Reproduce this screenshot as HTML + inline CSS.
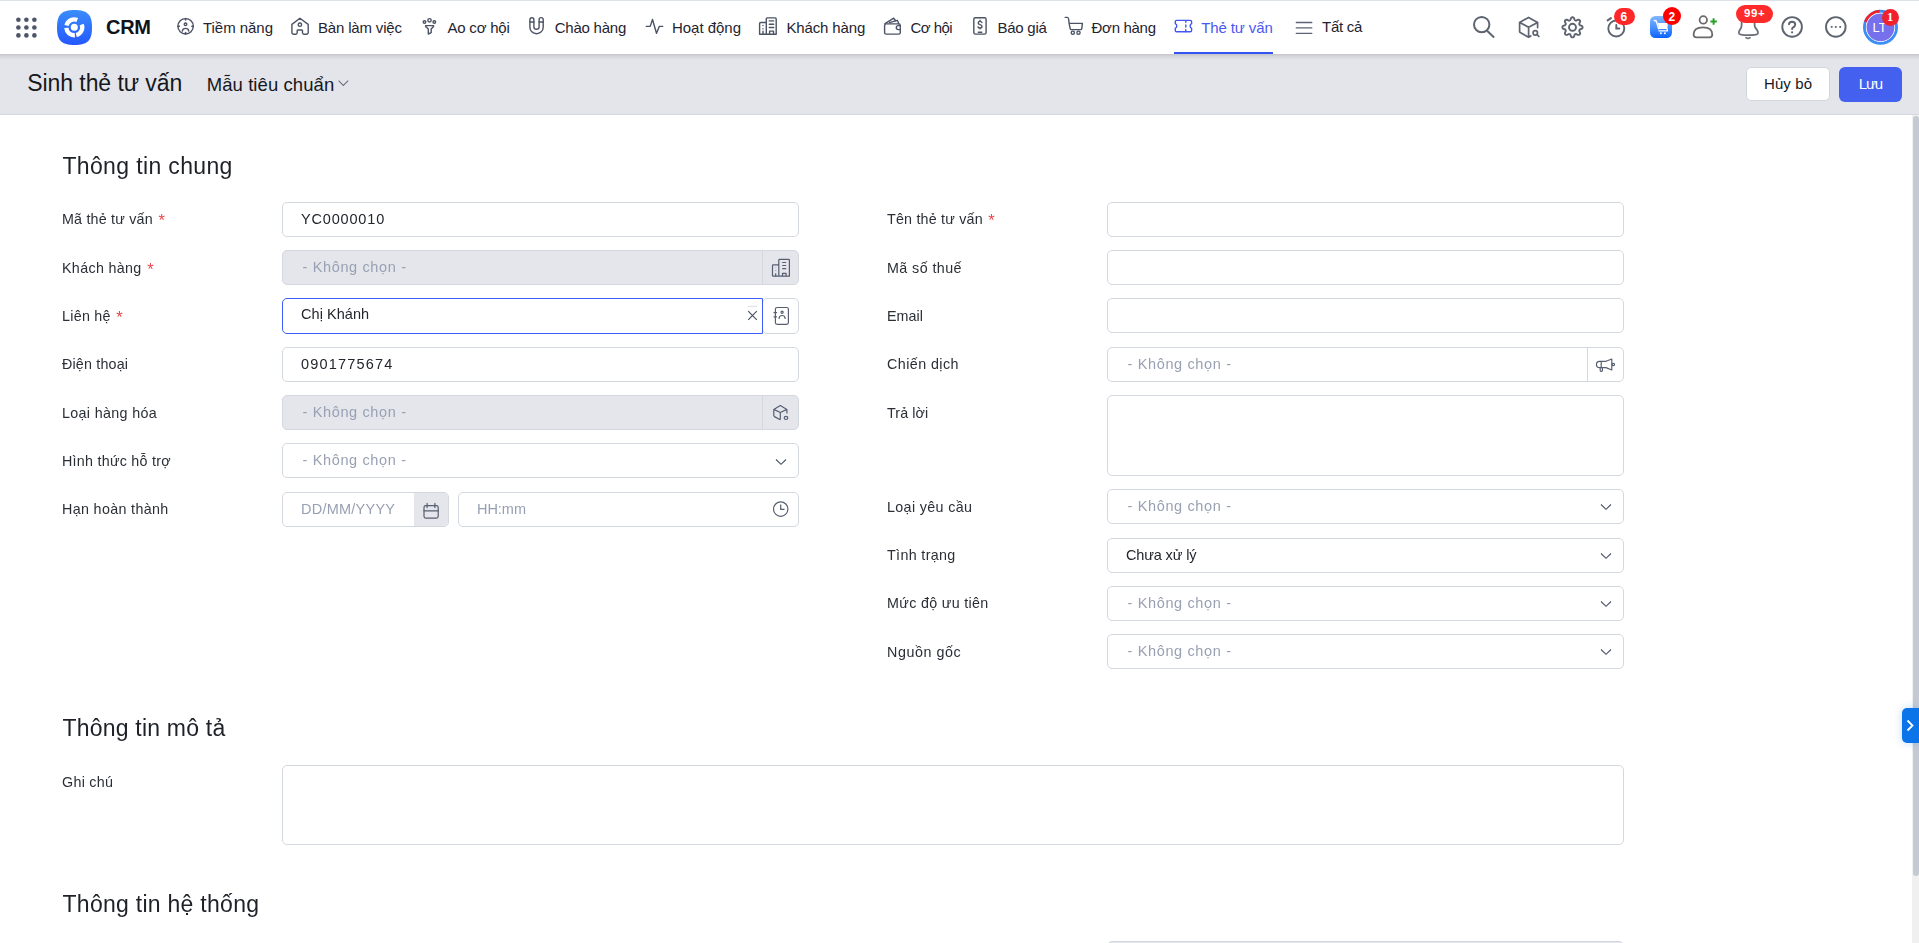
<!DOCTYPE html>
<html><head><meta charset="utf-8"><style>
html,body{margin:0;padding:0}
body{width:1919px;height:943px;overflow:hidden;position:relative;background:#fff;font-family:"Liberation Sans",sans-serif}
.a{position:absolute}
.t{position:absolute;white-space:nowrap}
svg.a{overflow:visible}
</style></head><body>
<div class="a" style="left:0px;top:0px;width:1919px;height:1px;background:#dde2e6"></div>
<div class="a" style="left:0px;top:1px;width:1919px;height:53px;background:#fff"></div>
<svg class="a" style="left:0px;top:0px;" width="50" height="54" viewBox="0 0 50 54"><circle cx="18.4" cy="19.7" r="2.3" fill="#4d5568"/><circle cx="18.4" cy="27.5" r="2.3" fill="#4d5568"/><circle cx="18.4" cy="35.4" r="2.3" fill="#4d5568"/><circle cx="26.4" cy="19.7" r="2.3" fill="#4d5568"/><circle cx="26.4" cy="27.5" r="2.3" fill="#4d5568"/><circle cx="26.4" cy="35.4" r="2.3" fill="#4d5568"/><circle cx="34.4" cy="19.7" r="2.3" fill="#4d5568"/><circle cx="34.4" cy="27.5" r="2.3" fill="#4d5568"/><circle cx="34.4" cy="35.4" r="2.3" fill="#4d5568"/></svg>
<svg class="a" style="left:57px;top:10px;" width="35" height="35" viewBox="0 0 35 35"><defs><linearGradient id="lg" x1="0" y1="0" x2="0" y2="1"><stop offset="0" stop-color="#3a8cfb"/><stop offset="1" stop-color="#2458fe"/></linearGradient></defs>
<path d="M17.5 0C30.5 0 35 4.5 35 17.5S30.5 35 17.5 35 0 30.5 0 17.5 4.5 0 17.5 0Z" fill="url(#lg)"/>
<circle cx="17.3" cy="17.3" r="3.5" fill="#fff"/><path d="M7.46 15.03A10.1 10.1 0 0 1 21.08 7.94L19.47 11.92A5.8 5.8 0 0 0 11.65 16.00Z" fill="#fff"/><path d="M26.73 13.68A10.1 10.1 0 0 1 19.74 27.10L18.70 22.93A5.8 5.8 0 0 0 22.71 15.22Z" fill="#fff"/><path d="M18.00 27.38A10.1 10.1 0 0 1 7.22 18.00L11.51 17.70A5.8 5.8 0 0 0 17.70 23.09Z" fill="#fff"/></svg>
<div id="t1" class="t" style="left:106px;top:15.00px;font-size:20px;line-height:24px;color:#111318;letter-spacing:-0.273px;font-weight:bold;">CRM</div>
<svg class="a" style="left:172px;top:14px;" width="28" height="26" viewBox="0 0 28 26"><g fill="none" stroke="#4b5365" stroke-width="1.4" stroke-linecap="round" stroke-linejoin="round"><circle cx="13.6" cy="12.3" r="7.7"/><circle cx="13.5" cy="10.3" r="1.3"/><path d="M10.3 17.1A3.3 3.3 0 0 1 16.8 17.1"/><path d="M13.6 4.6V6M13.6 18.6V20M5.9 12.3H7.3M19.9 12.3H21.3" stroke-width="1.6"/></g></svg>
<svg class="a" style="left:286px;top:14px;" width="28" height="26" viewBox="0 0 28 26"><g fill="none" stroke="#4b5365" stroke-width="1.4" stroke-linecap="round" stroke-linejoin="round"><path d="M5.9 10.4L13.9 4.2L22.2 10.4V18.4A1.8 1.8 0 0 1 20.4 20.2H17.8Q16.6 20.2 16.5 18.8V16.6Q16.4 16 15.8 16H11.9Q11.3 16 11.2 16.6V18.8Q11.1 20.2 9.9 20.2H7.7A1.8 1.8 0 0 1 5.9 18.4Z"/><circle cx="13.9" cy="10.7" r="1.7"/></g></svg>
<svg class="a" style="left:416px;top:14px;" width="28" height="26" viewBox="0 0 28 26"><g fill="none" stroke="#4b5365" stroke-width="1.4" stroke-linecap="round" stroke-linejoin="round"><circle cx="8.5" cy="8" r="1.3"/><circle cx="13.5" cy="6.3" r="1.7"/><circle cx="18.3" cy="8" r="1.3"/><path d="M9.6 11.6H17.6Q17.8 12.6 17.1 13.1L15.2 15.1V18.6L12.3 20V15.1L10.2 13.1Q9.4 12.6 9.6 11.6Z"/></g></svg>
<svg class="a" style="left:522px;top:14px;" width="28" height="26" viewBox="0 0 28 26"><g fill="none" stroke="#4b5365" stroke-width="1.4" stroke-linecap="round" stroke-linejoin="round"><path d="M7.9 13.15V5.7A2 2 0 0 1 11.9 5.7V12.7A2.6 2.6 0 0 0 17.1 12.7V5.7A2.05 2.05 0 0 1 21.2 5.7V13.15A6.65 6.65 0 0 1 7.9 13.15Z"/><path d="M7.9 8H11.9M17.1 8H21.2"/></g></svg>
<svg class="a" style="left:640px;top:14px;" width="28" height="26" viewBox="0 0 28 26"><g fill="none" stroke="#4b5365" stroke-width="1.4" stroke-linecap="round" stroke-linejoin="round"><path d="M6.3 12.4H10.2L12.5 5.5L16.5 19.3L19.3 12.4H22.7"/></g></svg>
<svg class="a" style="left:754px;top:14px;" width="28" height="26" viewBox="0 0 28 26"><g fill="none" stroke="#4b5365" stroke-width="1.4" stroke-linecap="round" stroke-linejoin="round"><path d="M5.6 20.2V9.6Q5.6 8.5 6.7 8.5H12.3M12.3 20.2V5Q12.3 3.9 13.4 3.9H21.1Q22.2 3.9 22.2 5V20.2H5.6"/><path d="M15.3 6.9H19.7M15.3 10.3H19.7M15.3 13.5H19.7M15.6 20.2V17.1H19.5V20.2M9 11.4V11.5M9 14.7V14.8M9 17.3V20.2"/></g></svg>
<svg class="a" style="left:878px;top:14px;" width="28" height="26" viewBox="0 0 28 26"><g fill="none" stroke="#4b5365" stroke-width="1.4" stroke-linecap="round" stroke-linejoin="round"><rect x="6.6" y="9.9" width="15.7" height="10.2" rx="1.6"/><path d="M22.3 11.6H20.3A2 2 0 0 0 20.3 15.6H22.3"/><path d="M7 9.7L15.7 4.2L17.8 7M11.5 8.6L19.3 6.3L20.8 9.7"/></g></svg>
<svg class="a" style="left:966px;top:14px;" width="28" height="26" viewBox="0 0 28 26"><g fill="none" stroke="#4b5365" stroke-width="1.4" stroke-linecap="round" stroke-linejoin="round"><rect x="7.8" y="3.7" width="12.3" height="16.4" rx="1.6"/><path d="M15.9 8.5Q15.4 7.4 14 7.4Q12.2 7.4 12.2 8.9Q12.2 10.2 14 10.6Q16 11 16 12.5Q16 14 14 14Q12.5 14 12 12.9M14 6.3V7.4M14 14V14.9M12.3 18.3H15.8"/></g></svg>
<svg class="a" style="left:1060px;top:14px;" width="28" height="26" viewBox="0 0 28 26"><g fill="none" stroke="#4b5365" stroke-width="1.4" stroke-linecap="round" stroke-linejoin="round"><path d="M5.2 3.4H7.2Q8.4 3.6 8.6 5L9.1 9.4H22.4L21.8 14.6Q21.6 15.6 20.6 15.6H11.3Q10.4 15.6 10.2 14.6L9.1 9.4"/><circle cx="12.8" cy="18.7" r="1.6"/><circle cx="18.5" cy="18.7" r="1.6"/></g></svg>
<svg class="a" style="left:1170px;top:15px;" width="28" height="26" viewBox="0 0 28 26"><g fill="none" stroke="#4257f0" stroke-width="1.4" stroke-linecap="round" stroke-linejoin="round"><path d="M5.3 6.7Q5.3 5.4 6.6 5.4H20.3Q21.6 5.4 21.6 6.7V8.6A2.6 2.6 0 0 0 21.6 13.3V15.4Q21.6 16.7 20.3 16.7H6.6Q5.3 16.7 5.3 15.4V13.3A2.6 2.6 0 0 0 5.3 8.6Z"/><path d="M15.8 5.6V7.2M15.8 10V12M15.8 14.8V16.5"/></g></svg>
<svg class="a" style="left:1290px;top:14px;" width="28" height="26" viewBox="0 0 28 26"><g fill="none" stroke="#5c6376" stroke-width="1.3" stroke-linecap="round" stroke-linejoin="round"><path d="M6.3 8.5H21.8M6.3 13.9H21.8M6.3 19.4H21.8"/></g></svg>
<div id="t2" class="t" style="left:203px;top:19.00px;font-size:15px;line-height:18px;color:#1f2430;letter-spacing:-0.039px;font-weight:normal;">Tiềm năng</div>
<div id="t3" class="t" style="left:318px;top:19.00px;font-size:15px;line-height:18px;color:#1f2430;letter-spacing:-0.170px;font-weight:normal;">Bàn làm việc</div>
<div id="t4" class="t" style="left:447.5px;top:19.00px;font-size:15px;line-height:18px;color:#1f2430;letter-spacing:-0.218px;font-weight:normal;">Ao cơ hội</div>
<div id="t5" class="t" style="left:554.75px;top:19.00px;font-size:15px;line-height:18px;color:#1f2430;letter-spacing:-0.238px;font-weight:normal;">Chào hàng</div>
<div id="t6" class="t" style="left:672px;top:19.00px;font-size:15px;line-height:18px;color:#1f2430;letter-spacing:-0.029px;font-weight:normal;">Hoạt động</div>
<div id="t7" class="t" style="left:786.5px;top:19.00px;font-size:15px;line-height:18px;color:#1f2430;letter-spacing:-0.148px;font-weight:normal;">Khách hàng</div>
<div id="t8" class="t" style="left:910.6px;top:19.00px;font-size:15px;line-height:18px;color:#1f2430;letter-spacing:-0.572px;font-weight:normal;">Cơ hội</div>
<div id="t9" class="t" style="left:997.5px;top:19.00px;font-size:15px;line-height:18px;color:#1f2430;letter-spacing:-0.246px;font-weight:normal;">Báo giá</div>
<div id="t10" class="t" style="left:1091.6px;top:19.00px;font-size:15px;line-height:18px;color:#1f2430;letter-spacing:-0.309px;font-weight:normal;">Đơn hàng</div>
<div id="t11" class="t" style="left:1201.25px;top:19.00px;font-size:15px;line-height:18px;color:#4a58f0;letter-spacing:-0.120px;font-weight:normal;">Thẻ tư vấn</div>
<div id="t12" class="t" style="left:1322px;top:18.00px;font-size:15px;line-height:18px;color:#1f2430;letter-spacing:-0.278px;font-weight:normal;">Tất cả</div>
<div class="a" style="left:1174px;top:52px;width:99px;height:2px;background:#3553f0"></div>
<svg class="a" style="left:1466px;top:10px;" width="34" height="34" viewBox="0 0 34 34"><g fill="none" stroke="#5d6470" stroke-width="2" stroke-linecap="round"><circle cx="15.7" cy="14.6" r="7.7"/><path d="M21.6 21.3L27.6 26.9"/></g></svg>
<svg class="a" style="left:1512px;top:10px;" width="34" height="34" viewBox="0 0 34 34"><g fill="none" stroke="#5d6470" stroke-width="1.7" stroke-linecap="round" stroke-linejoin="round"><path d="M16.6 27.2L8.2 22.6Q7.6 22.2 7.6 21.6V12.4L16.6 7.4L25.6 12.4V17.6M7.6 12.4L16.6 17.2L25.6 12.4M16.6 17.2V27.2L18.8 26"/><circle cx="23.3" cy="22.9" r="2.2"/><path d="M25 24.6L26.9 26.5"/></g></svg>
<svg class="a" style="left:1555px;top:10px;" width="34" height="34" viewBox="0 0 34 34"><g fill="none" stroke="#5d6470" stroke-width="1.9" stroke-linejoin="round"><path d="M27.60 17.30 L27.55 17.69 L27.38 18.08 L27.11 18.44 L26.73 18.76 L26.08 19.01 L25.43 19.20 L25.03 19.42 L24.71 19.64 L24.49 19.88 L24.34 20.13 L24.26 20.42 L24.26 20.74 L24.32 21.12 L24.45 21.56 L24.78 22.16 L25.06 22.79 L25.10 23.29 L25.04 23.74 L24.88 24.12 L24.64 24.44 L24.32 24.68 L23.94 24.84 L23.49 24.90 L22.99 24.86 L22.36 24.58 L21.76 24.25 L21.32 24.12 L20.94 24.06 L20.62 24.06 L20.33 24.14 L20.08 24.29 L19.84 24.51 L19.62 24.83 L19.40 25.23 L19.21 25.88 L18.96 26.53 L18.64 26.91 L18.28 27.18 L17.89 27.35 L17.50 27.40 L17.11 27.35 L16.72 27.18 L16.36 26.91 L16.04 26.53 L15.79 25.88 L15.60 25.23 L15.38 24.83 L15.16 24.51 L14.92 24.29 L14.67 24.14 L14.38 24.06 L14.06 24.06 L13.68 24.12 L13.24 24.25 L12.64 24.58 L12.01 24.86 L11.51 24.90 L11.06 24.84 L10.68 24.68 L10.36 24.44 L10.12 24.12 L9.96 23.74 L9.90 23.29 L9.94 22.79 L10.22 22.16 L10.55 21.56 L10.68 21.12 L10.74 20.74 L10.74 20.42 L10.66 20.13 L10.51 19.88 L10.29 19.64 L9.97 19.42 L9.57 19.20 L8.92 19.01 L8.27 18.76 L7.89 18.44 L7.62 18.08 L7.45 17.69 L7.40 17.30 L7.45 16.91 L7.62 16.52 L7.89 16.16 L8.27 15.84 L8.92 15.59 L9.57 15.40 L9.97 15.18 L10.29 14.96 L10.51 14.72 L10.66 14.47 L10.74 14.18 L10.74 13.86 L10.68 13.48 L10.55 13.04 L10.22 12.44 L9.94 11.81 L9.90 11.31 L9.96 10.86 L10.12 10.48 L10.36 10.16 L10.68 9.92 L11.06 9.76 L11.51 9.70 L12.01 9.74 L12.64 10.02 L13.24 10.35 L13.68 10.48 L14.06 10.54 L14.38 10.54 L14.67 10.46 L14.92 10.31 L15.16 10.09 L15.38 9.77 L15.60 9.37 L15.79 8.72 L16.04 8.07 L16.36 7.69 L16.72 7.42 L17.11 7.25 L17.50 7.20 L17.89 7.25 L18.28 7.42 L18.64 7.69 L18.96 8.07 L19.21 8.72 L19.40 9.37 L19.62 9.77 L19.84 10.09 L20.08 10.31 L20.33 10.46 L20.62 10.54 L20.94 10.54 L21.32 10.48 L21.76 10.35 L22.36 10.02 L22.99 9.74 L23.49 9.70 L23.94 9.76 L24.32 9.92 L24.64 10.16 L24.88 10.48 L25.04 10.86 L25.10 11.31 L25.06 11.81 L24.78 12.44 L24.45 13.04 L24.32 13.48 L24.26 13.86 L24.26 14.18 L24.34 14.47 L24.49 14.72 L24.71 14.96 L25.03 15.18 L25.43 15.40 L26.08 15.59 L26.73 15.84 L27.11 16.16 L27.38 16.52 L27.55 16.91Z"/><circle cx="17.5" cy="17.3" r="3.5"/></g></svg>
<svg class="a" style="left:1600px;top:2px;" width="40" height="40" viewBox="0 0 40 40"><g fill="none" stroke="#5d6470" stroke-width="1.9" stroke-linecap="round"><circle cx="16.3" cy="26.5" r="8"/><path d="M16.3 22.9V26.5H19.3M7.6 18.4L11 16.1"/></g></svg>
<div class="a" style="left:1614px;top:8px;width:21px;height:17px;background:#ff2727;border-radius:8.5px"></div>
<div id="t13" class="t" style="left:1620.5px;top:10.00px;font-size:12px;line-height:14px;color:#fff;letter-spacing:0.000px;font-weight:bold;">6</div>
<svg class="a" style="left:1650px;top:16px;" width="22" height="22" viewBox="0 0 22 22"><defs><linearGradient id="cg" x1="0" y1="0" x2="0" y2="1"><stop offset="0" stop-color="#80b7ff"/><stop offset="0.5" stop-color="#4b93ff"/><stop offset="1" stop-color="#0a62ff"/></linearGradient></defs><rect width="22" height="22" rx="5.5" fill="url(#cg)"/><path d="M4.3 4.6Q5.9 4.4 6.4 5.4L8.6 12.9" fill="none" stroke="#fff" stroke-width="1.4" stroke-linecap="round"/><path d="M7.9 7.1H17.8L17.3 12.9H9Z" fill="#fff"/><path d="M8.6 14.8H17.3V12.5" fill="none" stroke="#fff" stroke-width="1.3"/><circle cx="10.9" cy="17.2" r="1" fill="#fff"/><circle cx="14.9" cy="17.2" r="1" fill="#fff"/></svg>
<div class="a" style="left:1663px;top:7px;width:18px;height:18px;background:#ff0000;border-radius:9px"></div>
<div id="t14" class="t" style="left:1668.5px;top:10.00px;font-size:12px;line-height:14px;color:#fff;letter-spacing:0.000px;font-weight:bold;">2</div>
<svg class="a" style="left:1688px;top:8px;" width="34" height="34" viewBox="0 0 34 34"><g fill="none" stroke="#6b6b6b" stroke-width="1.8"><circle cx="15.3" cy="11.9" r="3.7"/><path d="M5.6 26.6Q5.6 19.3 15 19.3Q24.3 19.3 24.3 26.6Q24.3 29.4 21.5 29.4H8.4Q5.6 29.4 5.6 26.6Z"/></g><path d="M25.6 10.3V16.7M22.4 13.5H28.8" stroke="#22a122" stroke-width="1.9"/></svg>
<svg class="a" style="left:1730px;top:2px;" width="50" height="44" viewBox="0 0 50 44"><g fill="none" stroke="#6b7078" stroke-width="1.8" stroke-linecap="round" stroke-linejoin="round"><path d="M11.6 18V23.4Q11.6 25.4 10 27.6Q8.6 29.4 8.9 31.2Q9.4 33.1 18.5 33.1Q27.6 33.1 28 31.2Q28.2 29.4 26.8 27.6Q24.6 25 24.6 23.4V18"/><path d="M16 35.6Q18 37.2 20 35.6" stroke-width="1.6"/></g></svg>
<div class="a" style="left:1736px;top:5px;width:37px;height:17.5px;background:#ff2a2a;border-radius:9px"></div>
<div id="t15" class="t" style="left:1744px;top:6.00px;font-size:11.5px;line-height:14px;color:#fff;letter-spacing:0.592px;font-weight:bold;">99+</div>
<svg class="a" style="left:1775px;top:10px;" width="80" height="34" viewBox="0 0 80 34"><g fill="none" stroke="#5d6470" stroke-width="1.9" stroke-linecap="round"><circle cx="17.1" cy="16.9" r="9.8"/><path d="M14 14.2Q14.3 11.8 17.1 11.8Q20.2 11.8 20.2 14.6Q20.2 16.4 18.2 17.3Q17.1 17.9 17.1 19.1"/><circle cx="60.8" cy="16.9" r="9.8"/></g><circle cx="17.1" cy="22.3" r="1.1" fill="#5d6470"/><rect x="55.8" y="16" width="1.8" height="1.8" fill="#5d6470"/><rect x="59.9" y="16" width="1.8" height="1.8" fill="#5d6470"/><rect x="64.3" y="16" width="1.8" height="1.8" fill="#5d6470"/></svg>
<svg class="a" style="left:1856px;top:2px;" width="50" height="48" viewBox="0 0 50 48"><circle cx="24.5" cy="25.3" r="16" fill="none" stroke="#3b8ef7" stroke-width="3"/><path d="M9.4 19.9A16 16 0 0 1 23.7 9.3" fill="none" stroke="#f0222c" stroke-width="3"/><circle cx="24.5" cy="25.3" r="14.6" fill="#fff"/><circle cx="24.5" cy="25.3" r="13.9" fill="#7670ec"/></svg>
<div id="t16" class="t" style="left:1872.5px;top:20.00px;font-size:13px;line-height:16px;color:#fff;letter-spacing:-0.019px;font-weight:normal;">LT</div>
<div class="a" style="left:1882px;top:9px;width:17px;height:17px;background:#f0202c;border-radius:50%"></div>
<div id="t17" class="t" style="left:1887px;top:10.00px;font-size:12.5px;line-height:15px;color:#fff;letter-spacing:0.000px;font-weight:bold;font-family:'Liberation Serif',serif">1</div>
<div class="a" style="left:0px;top:54px;width:1919px;height:60px;background:#e3e5ea"></div>
<div class="a" style="left:0px;top:54px;width:1919px;height:6px;background:linear-gradient(#c4c5cb,#d3d5db 35%,#e3e5ea)"></div>
<div class="a" style="left:0px;top:114px;width:1919px;height:1px;background:#d3d7de"></div>
<div id="t18" class="t" style="left:27.3px;top:69.00px;font-size:23px;line-height:28px;color:#16181d;letter-spacing:-0.076px;font-weight:normal;">Sinh thẻ tư vấn</div>
<div id="t19" class="t" style="left:206.7px;top:74.00px;font-size:18.5px;line-height:22px;color:#16181d;letter-spacing:0.083px;font-weight:normal;">Mẫu tiêu chuẩn</div>
<svg class="a" style="left:338px;top:80px;" width="11" height="7" viewBox="0 0 11 7"><path d="M0.6 0.6L5.3 5.4L10.2 0.6" fill="none" stroke="#6b7280" stroke-width="1.1"/></svg>
<div class="a" style="left:1746px;top:67px;width:84px;height:34px;background:#fff;border:1px solid #d3d6dc;border-radius:5px;box-sizing:border-box"></div>
<div id="t20" class="t" style="left:1764px;top:75.00px;font-size:15px;line-height:18px;color:#16181d;letter-spacing:0.094px;font-weight:normal;">Hủy bỏ</div>
<div class="a" style="left:1839px;top:67px;width:63px;height:35px;background:#4361ee;border-radius:6px"></div>
<div id="t21" class="t" style="left:1858.7px;top:75.00px;font-size:15px;line-height:18px;color:#fff;letter-spacing:-1.117px;font-weight:normal;">Lưu</div>
<div class="a" style="left:1912px;top:115px;width:7px;height:828px;background:#f0f0f0"></div>
<div class="a" style="left:1913px;top:116px;width:6px;height:760px;background:#c5c9d4;border-radius:3px"></div>
<div class="a" style="left:1902px;top:708px;width:17px;height:35px;background:#0a74e8;border-radius:5px 0 0 5px;box-shadow:0 0 8px rgba(10,116,232,.25)"></div>
<svg class="a" style="left:1902px;top:708px;" width="17" height="35" viewBox="0 0 17 35"><path d="M5.5 12.5L10.5 17.5L5.5 22.5" fill="none" stroke="#fff" stroke-width="1.8"/></svg>
<div class="a" style="left:0;top:0;width:1919px;height:943px;will-change:transform">
<div id="t22" class="t" style="left:62.4px;top:152.00px;font-size:23px;line-height:28px;color:#1e2128;letter-spacing:0.360px;font-weight:normal;">Thông tin chung</div>
<div id="t23" class="t" style="left:62.5px;top:714.00px;font-size:23px;line-height:28px;color:#1e2128;letter-spacing:0.206px;font-weight:normal;">Thông tin mô tả</div>
<div id="t24" class="t" style="left:62.5px;top:890.00px;font-size:23px;line-height:28px;color:#1e2128;letter-spacing:0.275px;font-weight:normal;">Thông tin hệ thống</div>
<div id="t25" class="t" style="left:62px;top:211.00px;font-size:14.3px;line-height:17px;color:#2b2f36;letter-spacing:0.196px;font-weight:normal;">Mã thẻ tư vấn</div>
<div id="t26" class="t" style="left:158.45px;top:210.00px;font-size:16.5px;line-height:20px;color:#e8474c;letter-spacing:0.000px;font-weight:normal;">*</div>
<div id="t27" class="t" style="left:62px;top:260.00px;font-size:14.3px;line-height:17px;color:#2b2f36;letter-spacing:0.330px;font-weight:normal;">Khách hàng</div>
<div id="t28" class="t" style="left:147.2px;top:259.00px;font-size:16.5px;line-height:20px;color:#e8474c;letter-spacing:0.000px;font-weight:normal;">*</div>
<div id="t29" class="t" style="left:62px;top:308.00px;font-size:14.3px;line-height:17px;color:#2b2f36;letter-spacing:0.266px;font-weight:normal;">Liên hệ</div>
<div id="t30" class="t" style="left:116.2px;top:307.00px;font-size:16.5px;line-height:20px;color:#e8474c;letter-spacing:0.000px;font-weight:normal;">*</div>
<div id="t31" class="t" style="left:62px;top:356.00px;font-size:14.3px;line-height:17px;color:#2b2f36;letter-spacing:0.179px;font-weight:normal;">Điện thoại</div>
<div id="t32" class="t" style="left:62px;top:405.00px;font-size:14.3px;line-height:17px;color:#2b2f36;letter-spacing:0.338px;font-weight:normal;">Loại hàng hóa</div>
<div id="t33" class="t" style="left:62px;top:453.00px;font-size:14.3px;line-height:17px;color:#2b2f36;letter-spacing:0.255px;font-weight:normal;">Hình thức hỗ trợ</div>
<div id="t34" class="t" style="left:62px;top:501.00px;font-size:14.3px;line-height:17px;color:#2b2f36;letter-spacing:0.349px;font-weight:normal;">Hạn hoàn thành</div>
<div class="a" style="left:282px;top:202px;width:517px;height:35px;background:#fff;border:1px solid #d3d7de;border-radius:5px;box-sizing:border-box"></div>
<div id="t35" class="t" style="left:301px;top:211.00px;font-size:14.5px;line-height:17px;color:#23262c;letter-spacing:0.826px;font-weight:normal;">YC0000010</div>
<div class="a" style="left:282px;top:250px;width:517px;height:35px;background:#e4e6eb;border:1px solid #d3d7de;border-radius:5px;box-sizing:border-box"></div>
<div class="a" style="left:762px;top:251px;width:1px;height:33px;background:#d3d7de"></div>
<div id="t36" class="t" style="left:302.5px;top:259.00px;font-size:14.5px;line-height:17px;color:#98a1b3;letter-spacing:0.644px;font-weight:normal;">- Không chọn -</div>
<svg class="a" style="left:768px;top:255px;" width="26" height="26" viewBox="0 0 26 26"><g fill="none" stroke="#565e70" stroke-width="1.2" stroke-linejoin="round"><path d="M4.5 21.2V10.6Q4.5 9.8 5.3 9.8H10.8M10.8 21.2V5.2Q10.8 4.4 11.6 4.4H20.6Q21.4 4.4 21.4 5.2V21.2H4.5"/><path d="M14.2 7.5H18.2M14.2 10.5H18.2M14.2 13.6H18.2M14.5 21.2V18.4H18.1V21.2M7.7 12.2V12.6M7.7 15.6V16M7.7 18.2V21.2"/></g></svg>
<div class="a" style="left:762px;top:298px;width:37px;height:36px;background:#fff;border:1px solid #d3d7de;border-radius:5px;box-sizing:border-box"></div>
<div class="a" style="left:282px;top:298px;width:481px;height:36px;background:#fff;border:1px solid #3d5cf5;border-radius:5px 0 0 5px;box-sizing:border-box"></div>
<div id="t37" class="t" style="left:301px;top:306.00px;font-size:14.5px;line-height:17px;color:#23262c;letter-spacing:0.048px;font-weight:normal;">Chị Khánh</div>
<svg class="a" style="left:744px;top:302px;" width="16" height="24" viewBox="0 0 16 24"><path d="M4 4.3H13" stroke="#d8dbe0" stroke-width="1"/><path d="M4.2 9.2L12.8 17.8M12.8 9.2L4.2 17.8" stroke="#4b5365" stroke-width="1.2"/></svg>
<svg class="a" style="left:768px;top:302px;" width="26" height="26" viewBox="0 0 26 26"><g fill="none" stroke="#565e70" stroke-width="1.2" stroke-linecap="round" stroke-linejoin="round"><rect x="7.4" y="5.5" width="13" height="16.8" rx="1.8"/><circle cx="14.1" cy="10.2" r="1.1"/><path d="M11.1 16.5A3 3 0 0 1 17.1 16.5M6 10.6H8.6M6 14.8H8.6"/></g></svg>
<div class="a" style="left:282px;top:347px;width:517px;height:35px;background:#fff;border:1px solid #d3d7de;border-radius:5px;box-sizing:border-box"></div>
<div id="t38" class="t" style="left:301px;top:356.00px;font-size:14.5px;line-height:17px;color:#23262c;letter-spacing:1.183px;font-weight:normal;">0901775674</div>
<div class="a" style="left:282px;top:395px;width:517px;height:35px;background:#e4e6eb;border:1px solid #d3d7de;border-radius:5px;box-sizing:border-box"></div>
<div class="a" style="left:762px;top:396px;width:1px;height:33px;background:#d3d7de"></div>
<div id="t39" class="t" style="left:302.5px;top:404.00px;font-size:14.5px;line-height:17px;color:#98a1b3;letter-spacing:0.644px;font-weight:normal;">- Không chọn -</div>
<svg class="a" style="left:760px;top:395px;" width="40" height="35" viewBox="0 0 40 35"><g fill="none" stroke="#565e70" stroke-width="1.2" stroke-linejoin="round"><path d="M20.3 24.8L14.4 21.6Q13.8 21.2 13.8 20.6V14.4L20.3 10.6L26.9 14.4V18.4M13.8 14.4L20.3 17.5L26.9 14.4M20.3 17.5V24.8"/><ellipse cx="26" cy="22.9" rx="1.8" ry="1.5"/></g></svg>
<div class="a" style="left:282px;top:443px;width:517px;height:35px;background:#fff;border:1px solid #d3d7de;border-radius:5px;box-sizing:border-box"></div>
<div id="t40" class="t" style="left:302.5px;top:452.00px;font-size:14.5px;line-height:17px;color:#98a1b3;letter-spacing:0.644px;font-weight:normal;">- Không chọn -</div>
<svg class="a" style="left:774.5px;top:457.7px;" width="12" height="8" viewBox="0 0 12 8"><path d="M1 1.5L6 6.3L11 1.5" fill="none" stroke="#4b5365" stroke-width="1.15"/></svg>
<div class="a" style="left:282px;top:492px;width:167px;height:35px;background:#fff;border:1px solid #d3d7de;border-radius:5px;box-sizing:border-box"></div>
<div class="a" style="left:414px;top:493px;width:34px;height:33px;background:#e4e6eb;border-radius:0 4px 4px 0"></div>
<div id="t41" class="t" style="left:301px;top:501.00px;font-size:14.5px;line-height:17px;color:#98a1b3;letter-spacing:0.240px;font-weight:normal;">DD/MM/YYYY</div>
<svg class="a" style="left:405px;top:490px;" width="60" height="40" viewBox="0 0 60 40"><g fill="none" stroke="#565e70" stroke-width="1.2" stroke-linecap="round"><rect x="19" y="15.6" width="14.2" height="12.5" rx="1.8"/><path d="M19 20.8H33.2M22.1 13.4V17.6M29.9 13.4V17.6"/></g></svg>
<div class="a" style="left:458px;top:492px;width:341px;height:35px;background:#fff;border:1px solid #d3d7de;border-radius:5px;box-sizing:border-box"></div>
<div id="t42" class="t" style="left:477px;top:501.00px;font-size:14.5px;line-height:17px;color:#98a1b3;letter-spacing:-0.035px;font-weight:normal;">HH:mm</div>
<svg class="a" style="left:765px;top:493px;" width="32" height="32" viewBox="0 0 32 32"><g fill="none" stroke="#565e70" stroke-width="1.2"><circle cx="15.7" cy="16.1" r="7.2"/><path d="M15.7 11.6V16.3H19.5"/></g></svg>
<div id="t43" class="t" style="left:887px;top:211.00px;font-size:14.3px;line-height:17px;color:#2b2f36;letter-spacing:0.198px;font-weight:normal;">Tên thẻ tư vấn</div>
<div id="t44" class="t" style="left:988.2px;top:210.00px;font-size:16.5px;line-height:20px;color:#e8474c;letter-spacing:0.000px;font-weight:normal;">*</div>
<div id="t45" class="t" style="left:887px;top:260.00px;font-size:14.3px;line-height:17px;color:#2b2f36;letter-spacing:0.418px;font-weight:normal;">Mã số thuế</div>
<div id="t46" class="t" style="left:887px;top:308.00px;font-size:14.3px;line-height:17px;color:#2b2f36;letter-spacing:0.062px;font-weight:normal;">Email</div>
<div id="t47" class="t" style="left:887px;top:356.00px;font-size:14.3px;line-height:17px;color:#2b2f36;letter-spacing:0.438px;font-weight:normal;">Chiến dịch</div>
<div id="t48" class="t" style="left:887px;top:405.00px;font-size:14.3px;line-height:17px;color:#2b2f36;letter-spacing:0.112px;font-weight:normal;">Trả lời</div>
<div id="t49" class="t" style="left:887px;top:499.00px;font-size:14.3px;line-height:17px;color:#2b2f36;letter-spacing:0.357px;font-weight:normal;">Loại yêu cầu</div>
<div id="t50" class="t" style="left:887px;top:547.00px;font-size:14.3px;line-height:17px;color:#2b2f36;letter-spacing:0.348px;font-weight:normal;">Tình trạng</div>
<div id="t51" class="t" style="left:887px;top:595.00px;font-size:14.3px;line-height:17px;color:#2b2f36;letter-spacing:0.328px;font-weight:normal;">Mức độ ưu tiên</div>
<div id="t52" class="t" style="left:887px;top:644.00px;font-size:14.3px;line-height:17px;color:#2b2f36;letter-spacing:0.555px;font-weight:normal;">Nguồn gốc</div>
<div class="a" style="left:1107px;top:202px;width:517px;height:35px;background:#fff;border:1px solid #d3d7de;border-radius:5px;box-sizing:border-box"></div>
<div class="a" style="left:1107px;top:250px;width:517px;height:35px;background:#fff;border:1px solid #d3d7de;border-radius:5px;box-sizing:border-box"></div>
<div class="a" style="left:1107px;top:298px;width:517px;height:35px;background:#fff;border:1px solid #d3d7de;border-radius:5px;box-sizing:border-box"></div>
<div class="a" style="left:1107px;top:347px;width:517px;height:35px;background:#fff;border:1px solid #d3d7de;border-radius:5px;box-sizing:border-box"></div>
<div class="a" style="left:1587px;top:348px;width:1px;height:33px;background:#d3d7de"></div>
<div id="t53" class="t" style="left:1127.5px;top:356.00px;font-size:14.5px;line-height:17px;color:#98a1b3;letter-spacing:0.644px;font-weight:normal;">- Không chọn -</div>
<svg class="a" style="left:1580px;top:345px;" width="50" height="40" viewBox="0 0 50 40"><g fill="none" stroke="#565e70" stroke-width="1.2" stroke-linejoin="round"><path d="M19.6 16.3H26L31.8 14V25L26 22.6H19.6A3.15 3.15 0 0 1 19.6 16.3Z"/><path d="M21.2 16.5V22.4M20.2 22.6V25.6Q20.2 26.4 21 26.4H21.6Q22.4 26.4 22.4 25.6V22.6"/><circle cx="33.3" cy="19.5" r="1.2"/></g></svg>
<div class="a" style="left:1107px;top:395px;width:517px;height:81px;background:#fff;border:1px solid #d3d7de;border-radius:5px;box-sizing:border-box"></div>
<div class="a" style="left:1107px;top:489px;width:517px;height:35px;background:#fff;border:1px solid #d3d7de;border-radius:5px;box-sizing:border-box"></div>
<div id="t54" class="t" style="left:1127.5px;top:498.00px;font-size:14.5px;line-height:17px;color:#98a1b3;letter-spacing:0.644px;font-weight:normal;">- Không chọn -</div>
<svg class="a" style="left:1599.5px;top:502.8px;" width="12" height="8" viewBox="0 0 12 8"><path d="M1 1.5L6 6.3L11 1.5" fill="none" stroke="#4b5365" stroke-width="1.15"/></svg>
<div class="a" style="left:1107px;top:586px;width:517px;height:35px;background:#fff;border:1px solid #d3d7de;border-radius:5px;box-sizing:border-box"></div>
<div id="t55" class="t" style="left:1127.5px;top:595.00px;font-size:14.5px;line-height:17px;color:#98a1b3;letter-spacing:0.644px;font-weight:normal;">- Không chọn -</div>
<svg class="a" style="left:1599.5px;top:599.8px;" width="12" height="8" viewBox="0 0 12 8"><path d="M1 1.5L6 6.3L11 1.5" fill="none" stroke="#4b5365" stroke-width="1.15"/></svg>
<div class="a" style="left:1107px;top:634px;width:517px;height:35px;background:#fff;border:1px solid #d3d7de;border-radius:5px;box-sizing:border-box"></div>
<div id="t56" class="t" style="left:1127.5px;top:643.00px;font-size:14.5px;line-height:17px;color:#98a1b3;letter-spacing:0.644px;font-weight:normal;">- Không chọn -</div>
<svg class="a" style="left:1599.5px;top:647.8px;" width="12" height="8" viewBox="0 0 12 8"><path d="M1 1.5L6 6.3L11 1.5" fill="none" stroke="#4b5365" stroke-width="1.15"/></svg>
<div class="a" style="left:1107px;top:538px;width:517px;height:35px;background:#fff;border:1px solid #d3d7de;border-radius:5px;box-sizing:border-box"></div>
<div id="t57" class="t" style="left:1126px;top:547.00px;font-size:14.5px;line-height:17px;color:#23262c;letter-spacing:-0.144px;font-weight:normal;">Chưa xử lý</div>
<svg class="a" style="left:1599.5px;top:551.8px;" width="12" height="8" viewBox="0 0 12 8"><path d="M1 1.5L6 6.3L11 1.5" fill="none" stroke="#4b5365" stroke-width="1.15"/></svg>
<div id="t58" class="t" style="left:62px;top:774.00px;font-size:14.3px;line-height:17px;color:#2b2f36;letter-spacing:0.286px;font-weight:normal;">Ghi chú</div>
<div class="a" style="left:282px;top:765px;width:1342px;height:80px;background:#fff;border:1px solid #d3d7de;border-radius:5px;box-sizing:border-box"></div>
<div class="a" style="left:1107px;top:941px;width:517px;height:35px;background:#e4e6eb;border:1px solid #d3d7de;border-radius:5px;box-sizing:border-box"></div>
</div>
</body></html>
